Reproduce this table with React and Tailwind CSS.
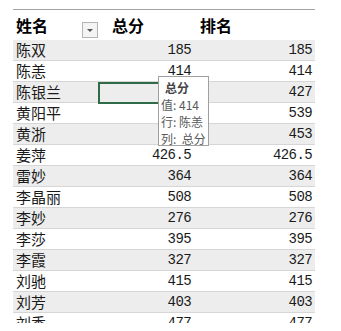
import React from "react";

const rows = [
  ["陈双", "185", "185"],
  ["陈恙", "414", "414"],
  ["陈银兰", "427", "427"],
  ["黄阳平", "539", "539"],
  ["黄浙", "453", "453"],
  ["姜萍", "426.5", "426.5"],
  ["雷妙", "364", "364"],
  ["李晶丽", "508", "508"],
  ["李妙", "276", "276"],
  ["李莎", "395", "395"],
  ["李霞", "327", "327"],
  ["刘驰", "415", "415"],
  ["刘芳", "403", "403"],
  ["刘秀", "477", "477"],
];

const cjk = { fontFamily: '"Noto Sans CJK SC", "Noto Sans", sans-serif' };
const mono = { fontFamily: '"Liberation Mono", "DejaVu Sans Mono", monospace' };

export default function App() {
  return (
    <div className="relative w-[341px] h-[331px] bg-white overflow-hidden">
      <div className="ml-[13px] mt-[9px] w-[302px] h-[314px] overflow-hidden border-t border-[#a3a3a3]">
        <div className="flex h-[30px] items-center text-[16px] font-bold text-black" style={cjk}>
          <div className="w-[85px] pl-[3px] flex items-center h-full relative">
            <span>姓名</span>
            <div className="absolute left-[69px] top-[12px] w-[16px] h-[16px] border border-[#b5b5b5] bg-[#f4f4f4] flex items-center justify-center">
              <svg width="8" height="5" viewBox="0 0 8 5">
                <path d="M1 1 L7 1 L4 4 Z" fill="#555" />
              </svg>
            </div>
          </div>
          <div className="w-[97px] pl-[14px]">总分</div>
          <div className="flex-1 pl-[5px]">排名</div>
        </div>
        {rows.map((r, i) => (
          <div
            key={i}
            className={
              "flex h-[21px] items-center border-b border-[#d6d6d6] text-[15px] text-[#1a1a1a] " +
              (i % 2 === 0 ? "bg-[#ededed]" : "bg-white")
            }
          >
            <div className="w-[85px] pl-[3px]" style={cjk}>{r[0]}</div>
            <div className="w-[97px] h-full relative flex items-center justify-end pr-[4px] text-[14px] tracking-[-0.6px]" style={mono}>
              {i === 2 ? (
                <div className="absolute left-0 top-0 w-[70px] h-[22px] border-2 border-[#2f6b47]" />
              ) : null}
              <span className={i === 2 ? "invisible" : ""}>{r[1]}</span>
            </div>
            <div className="flex-1 flex justify-end pr-[3px] text-[14px] tracking-[-0.6px]" style={mono}>{r[2]}</div>
          </div>
        ))}
      </div>
      <div
        className="absolute left-[158px] top-[76px] w-[51px] h-[70px] bg-white border border-[#a0a0a0] pl-[2px] pt-[2px] text-[12px] leading-[17px] text-[#5a5a5a] whitespace-nowrap overflow-hidden"
        style={cjk}
      >
        <div className="font-bold text-[#444] pl-[4px]">总分</div>
        <div>值: 414</div>
        <div>行: 陈恙</div>
        <div>列:&nbsp;&nbsp;总分</div>
      </div>
    </div>
  );
}
